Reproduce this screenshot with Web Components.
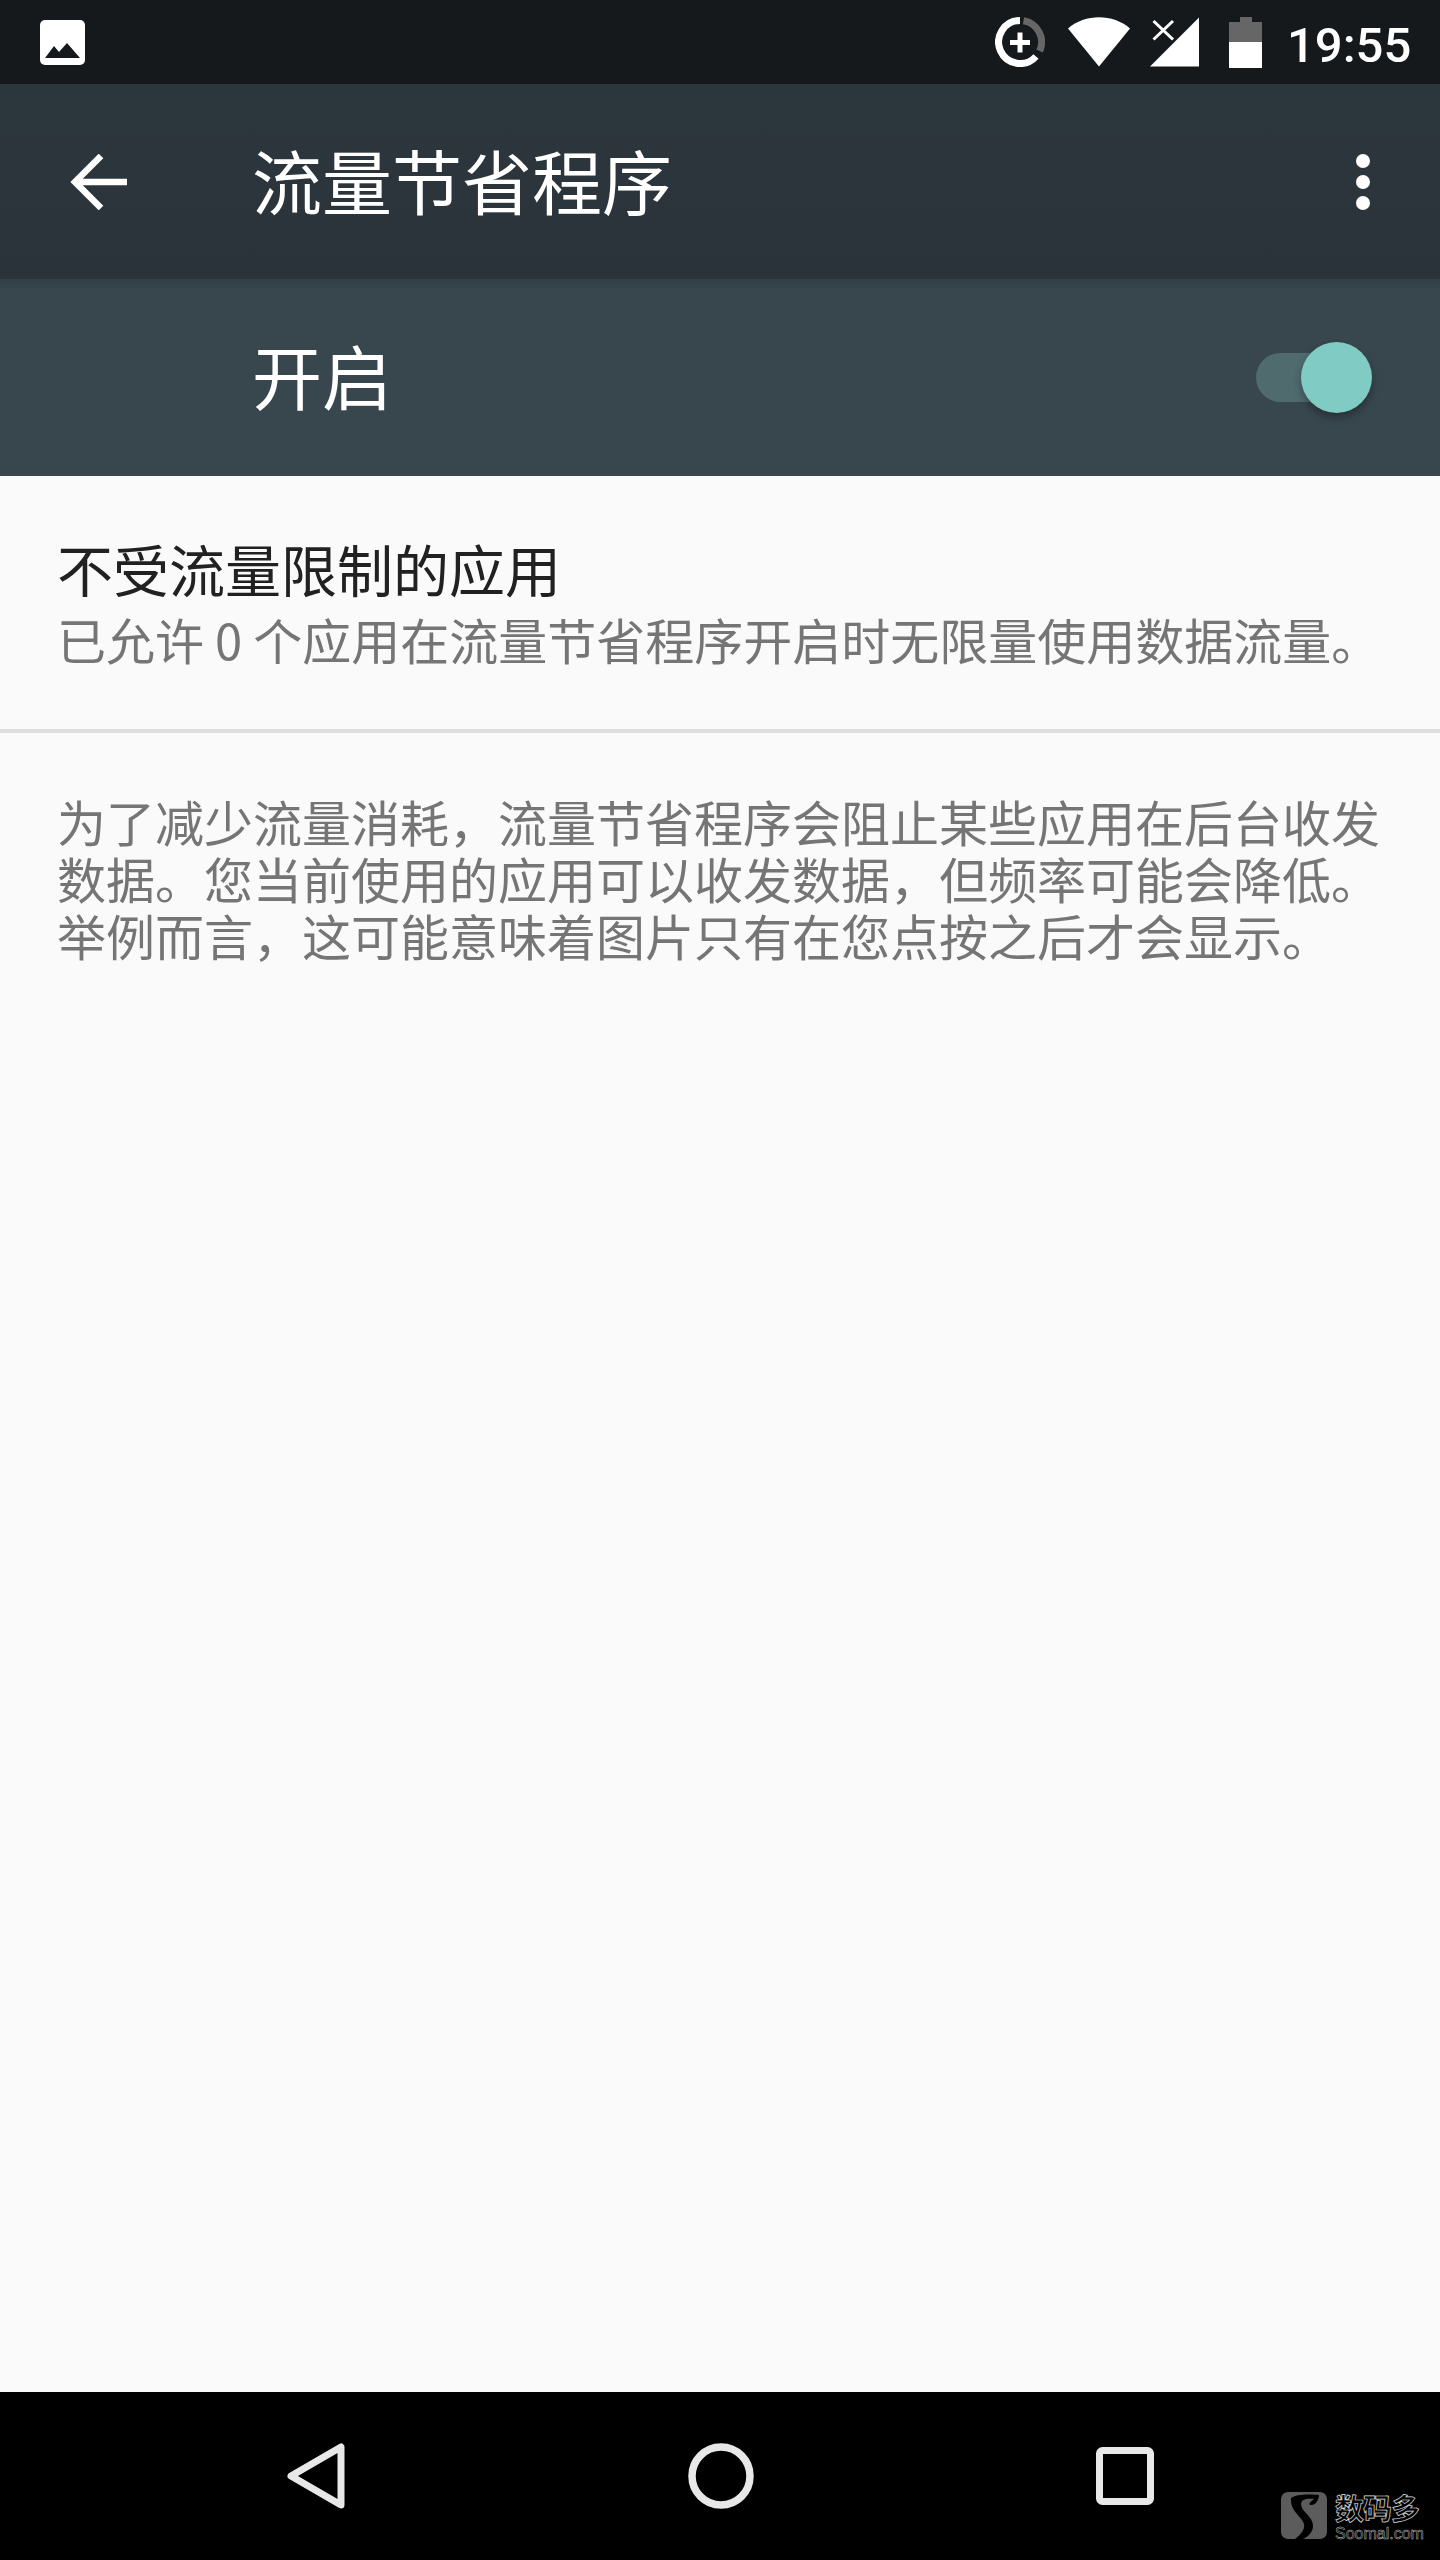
<!DOCTYPE html>
<html lang="zh">
<head>
<meta charset="utf-8">
<title>流量节省程序</title>
<style>
  html, body { margin: 0; background: #000; }
  body { font-family: "Noto Sans CJK SC", "Noto Sans", sans-serif; }
</style>
</head>
<body>
<data-saver-screen>
  <status-bar time="19:55"></status-bar>
  <app-toolbar>流量节省程序</app-toolbar>
  <master-switch>开启</master-switch>
  <pref-item heading="不受流量限制的应用">已允许 0 个应用在流量节省程序开启时无限量使用数据流量。</pref-item>
  <footer-text>为了减少流量消耗，流量节省程序会阻止某些应用在后台收发数据。您当前使用的应用可以收发数据，但频率可能会降低。举例而言，这可能意味着图片只有在您点按之后才会显示。</footer-text>
  <nav-bar></nav-bar>
</data-saver-screen>

<script>
class DataSaverScreen extends HTMLElement {
    constructor() {
        super();
        this.root = this.attachShadow({ mode: 'open' });
        this.root.innerHTML = `
<style>
    :host { display: flex; flex-direction: column; width: 1440px; height: 2560px; background: #fafafa; overflow: hidden; }
    ::slotted(footer-text) { flex: 1; }
</style>
<slot></slot>`;
    }
}

class StatusBar extends HTMLElement {
    constructor() {
        super();
        this.root = this.attachShadow({ mode: 'open' });
        this.root.innerHTML = `
<style>
    :host { display: flex; align-items: center; height: 84px; padding: 0 26px 0 40px; background: #15191c; color: #fff; font-family: Roboto, sans-serif; }
    svg { display: block; flex: none; }
    .photo { margin-right: auto; }
    .saver { margin-right: 23px; }
    .wifi { margin-right: 20px; }
    .signal { margin-right: 30px; }
    .battery { margin-right: 25px; }
    .time { font-size: 49px; font-weight: 500; line-height: 76px; padding-top: 8px; width: 127px; white-space: nowrap; }
</style>
<svg class="photo" width="45" height="45" viewBox="0 0 45 45">
    <rect width="45" height="45" rx="5" fill="#fff"/>
    <path d="M5 38 L14 26 L19 32 L27 23 L40 38 Z" fill="#15191c"/>
</svg>
<svg class="saver" width="50" height="50" viewBox="0 0 50 50" fill="none">
    <path d="M28.5 3.8 A21.5 21.5 0 0 1 44.6 34" stroke="#666" stroke-width="7"/>
    <path d="M25 3.5 A21.5 21.5 0 1 0 41 39.5" stroke="#fff" stroke-width="7"/>
    <path d="M15 25.500 H35 M25 15.500 V35.500" stroke="#fff" stroke-width="5"/>
</svg>
<svg class="wifi" width="62" height="50" viewBox="0 0 62 50">
    <path d="M0 11.5 C17 -3.5 45 -3.5 62 11.5 L31 49.5 Z" fill="#fff"/>
</svg>
<svg class="signal" width="49" height="50" viewBox="0 0 49 50">
    <path d="M49 0.5 V49.5 H0 Z" fill="#fff"/>
    <path d="M3.5 4 L23 22.5 M23 4 L3.5 22.5" stroke="#fff" stroke-width="3" fill="none"/>
</svg>
<svg class="battery" width="33" height="51" viewBox="0 0 33 51">
    <path d="M11 0 H23 V5 H33 V25 H0 V5 H11 Z" fill="#666"/>
    <rect y="25" width="33" height="26" fill="#fff"/>
</svg>
<span class="time"></span>`;
    }

    connectedCallback() {
        this.root.querySelector('.time').textContent = this.getAttribute('time');
    }
}

class AppToolbar extends HTMLElement {
    constructor() {
        super();
        this.root = this.attachShadow({ mode: 'open' });
        this.root.innerHTML = `
<style>
    :host { display: flex; align-items: center; height: 195px; padding: 0 70px; background: linear-gradient(#2c373d, #2a3339); color: #fff; font-size: 70px; }
    .back { display: block; flex: none; margin-right: 125px; }
    .title { flex: 1; white-space: nowrap; padding-bottom: 4px; }
    .more { display: block; flex: none; }
</style>
<svg class="back" width="57" height="56" viewBox="0 0 57 56" fill="none" stroke="#fff" stroke-width="6.5">
    <path d="M57 28 H5"/>
    <path d="M31 2 L5 28 L31 54" stroke-linecap="butt"/>
</svg>
<div class="title"><slot></slot></div>
<svg class="more" width="14" height="56" viewBox="0 0 14 56" fill="#fff">
    <circle cx="7" cy="7" r="7"/>
    <circle cx="7" cy="28" r="7"/>
    <circle cx="7" cy="49" r="7"/>
</svg>`;
    }
}

class MasterSwitch extends HTMLElement {
    constructor() {
        super();
        this.root = this.attachShadow({ mode: 'open' });
        this.root.innerHTML = `
<style>
    :host { display: flex; align-items: center; height: 197px; padding: 0 68px 0 252px; background: #38474e; color: #fff; font-size: 70px; position: relative; }
    :host::before { content: ""; position: absolute; left: 0; right: 0; top: 0; height: 12px; background: linear-gradient(rgba(0,0,0,.1), rgba(0,0,0,0)); }
    .label { flex: 1; padding-bottom: 6px; }
    .toggle { position: relative; width: 116px; height: 71px; flex: none; }
    .track { position: absolute; left: 0; top: 11px; width: 98px; height: 49px; border-radius: 25px; background: #4f6b6e; }
    .thumb { position: absolute; right: 0; top: 0; width: 71px; height: 71px; border-radius: 50%; background: #80cbc4; box-shadow: 0 5px 9px rgba(0,0,0,.3); }
</style>
<div class="label"><slot></slot></div>
<div class="toggle"><div class="track"></div><div class="thumb"></div></div>`;
    }
}

class PrefItem extends HTMLElement {
    constructor() {
        super();
        this.root = this.attachShadow({ mode: 'open' });
        this.root.innerHTML = `
<style>
    :host { display: block; height: 257px; padding: 55px 57px 0; box-sizing: border-box; border-bottom: 4px solid #dedede; }
    .heading { color: #212121; font-size: 56px; line-height: 74px; white-space: nowrap; }
    .summary { color: #757575; font-size: 49px; line-height: 66px; white-space: nowrap; margin-top: 1px; }
</style>
<div class="heading"></div>
<div class="summary"><slot></slot></div>`;
    }

    connectedCallback() {
        this.root.querySelector('.heading').textContent = this.getAttribute('heading');
    }
}

class FooterText extends HTMLElement {
    constructor() {
        super();
        this.root = this.attachShadow({ mode: 'open' });
        this.root.innerHTML = `
<style>
    :host { display: block; padding: 59px 56px 0 57px; color: #757575; font-size: 49px; line-height: 57.2px; }
</style>
<slot></slot>`;
    }
}

class NavBar extends HTMLElement {
    constructor() {
        super();
        this.root = this.attachShadow({ mode: 'open' });
        this.root.innerHTML = `
<style>
    :host { display: flex; justify-content: center; align-items: center; gap: 342px; height: 168px; background: #000; position: relative; }
    svg { display: block; flex: none; }
    .mark { position: absolute; left: 1281px; top: 100px; display: flex; gap: 8px; }
    .words { display: flex; flex-direction: column; color: #000; -webkit-text-stroke: .7px #e0e0e0; white-space: nowrap; }
    .cn { font-size: 29px; line-height: 30px; letter-spacing: -1px; font-weight: 700; }
    .en { font-family: "Liberation Sans", sans-serif; font-size: 16px; line-height: 14px; margin-top: 5px; -webkit-text-stroke: .5px #bbb; }
</style>
<svg class="back" width="60" height="68" viewBox="0 0 60 68" fill="none" stroke="#e8e8e8" stroke-width="7" stroke-linejoin="round">
    <path d="M55 5 V63 L5 34 Z"/>
</svg>
<svg class="home" width="66" height="66" viewBox="0 0 66 66" fill="none" stroke="#e8e8e8" stroke-width="7.5">
    <circle cx="33" cy="33" r="29"/>
</svg>
<svg class="recents" width="58" height="58" viewBox="0 0 58 58" fill="none" stroke="#e8e8e8" stroke-width="7">
    <rect x="3.500" y="3.500" width="51" height="51" rx="3"/>
</svg>
<div class="mark">
    <svg width="46" height="47" viewBox="0 0 46 47">
        <rect width="46" height="47" rx="7" fill="#5c5c5c"/>
        <path d="M10 6 C14 2 30 2 38 3 C38 8 34 14 29 13 C27 11 31 9 33 7 C26 6 20 7 20 12 C20 20 32 24 32 34 C32 40 27 45 22 47 L14 47 C20 42 24 38 23 32 C21 24 9 20 10 6 Z" fill="#000"/>
    </svg>
    <div class="words"><span class="cn">数码多</span><span class="en">Soomal.com</span></div>
</div>`;
    }
}

window.customElements.define('data-saver-screen', DataSaverScreen);
window.customElements.define('status-bar', StatusBar);
window.customElements.define('app-toolbar', AppToolbar);
window.customElements.define('master-switch', MasterSwitch);
window.customElements.define('pref-item', PrefItem);
window.customElements.define('footer-text', FooterText);
window.customElements.define('nav-bar', NavBar);
</script>
</body>
</html>
